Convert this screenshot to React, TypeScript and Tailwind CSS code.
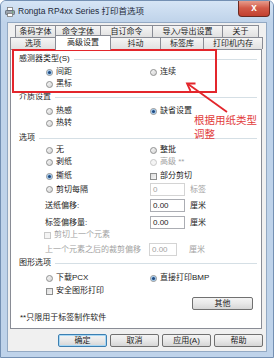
import React from "react";

function Radio({ checked = false, disabled = false }: { checked?: boolean; disabled?: boolean }) {
  return (
    <span
      className={`flex h-[7px] w-[7px] shrink-0 items-center justify-center rounded-full border ${
        disabled ? "border-[#c8c8c8] bg-[#f4f4f4]" : "border-[#8e8f8f] bg-gradient-to-br from-[#f8f8f8] to-[#d4d4d4]"
      }`}
    >
      {checked && <span className="h-[3px] w-[3px] rounded-full bg-[#1f4a80] shadow-[0_0_0_1px_#9cc3e6]" />}
    </span>
  );
}

function Check({ disabled = false }: { disabled?: boolean }) {
  return (
    <span
      className={`h-[7px] w-[7px] shrink-0 border ${
        disabled ? "border-[#c8c8c8] bg-[#f4f4f4]" : "border-[#8e8f8f] bg-gradient-to-br from-[#dcdcdc] to-[#f6f6f6]"
      }`}
    />
  );
}

function Opt({ label, checked, disabled }: { label: string; checked?: boolean; disabled?: boolean }) {
  return (
    <div className="flex items-center gap-[3px]">
      <Radio checked={checked} disabled={disabled} />
      <span className={disabled ? "text-[#a3a3a3]" : ""}>{label}</span>
    </div>
  );
}

function Box({ label, disabled }: { label: string; disabled?: boolean }) {
  return (
    <div className="flex items-center gap-[3px]">
      <Check disabled={disabled} />
      <span className={disabled ? "text-[#a3a3a3]" : ""}>{label}</span>
    </div>
  );
}

function Field({ value, disabled, narrow }: { value: string; disabled?: boolean; narrow?: boolean }) {
  return (
    <div
      className={`flex h-[13px] items-center border bg-white px-[2px] ${narrow ? "w-[28px]" : "w-[35px]"} ${
        disabled ? "border-[#d4d4d4] text-[#a3a3a3]" : "border-[#abadb3]"
      }`}
    >
      {value}
    </div>
  );
}

function Group({ label, className }: { label: string; className: string }) {
  return (
    <div className={`flex h-[12px] items-center pl-[8px] pr-[4px] ${className}`}>
      <span>{label}</span>
      <span className="ml-[4px] h-px flex-1 bg-[#d5dfe5]" />
    </div>
  );
}

function Tab({ label, w, active }: { label: string; w: string; active?: boolean }) {
  if (active) {
    return (
      <div
        className={`relative z-10 -mb-px -ml-px flex h-[15px] items-center justify-center border border-b-0 border-[#898c95] bg-white ${w}`}
      >
        {label}
      </div>
    );
  }
  return (
    <div
      className={`-ml-px flex h-[12px] items-center justify-center border border-b-0 border-[#898c95] bg-gradient-to-b from-[#f5f5f5] to-[#e1e1e1] first:ml-0 ${w}`}
    >
      {label}
    </div>
  );
}

function Btn({ label, primary }: { label: string; primary?: boolean }) {
  return (
    <div
      className={`flex h-[13px] w-[49px] items-center justify-center rounded-[2px] border bg-gradient-to-b from-[#f4f4f4] via-[#e8e8e8] to-[#d6d6d6] ${
        primary ? "border-[#3c7fb1] shadow-[inset_0_0_0_1px_#a8d8f5]" : "border-[#707070]"
      }`}
    >
      {label}
    </div>
  );
}

export default function App() {
  return (
    <div className="relative h-[358px] w-[274px] overflow-hidden rounded-t-[6px] border border-[#7490b3] bg-[#bfd3ea] font-['Liberation_Sans','Noto_Sans_CJK_SC',sans-serif] text-[8px] leading-none text-[#1b1b1b]">
      {/* title bar */}
      <div className="flex h-[21px] bg-gradient-to-b from-[#d6e5f5] to-[#bfd3ea]">
        <div className="flex items-center gap-[3px] pl-[4px]">
          <svg width="10" height="10" viewBox="0 0 10 10">
            <rect x="2.5" y="0.5" width="5" height="3" fill="#fff" stroke="#7a7a7a" strokeWidth="0.8" />
            <rect x="0.5" y="3.5" width="9" height="4" rx="0.8" fill="#9aa3ad" stroke="#5a6470" strokeWidth="0.8" />
            <rect x="2.5" y="6.5" width="5" height="3" fill="#fff" stroke="#7a7a7a" strokeWidth="0.8" />
            <rect x="7" y="4.5" width="1.2" height="1" fill="#4fb04f" />
          </svg>
          <span className="text-[8.5px] text-[#1e2a3a]">Rongta RP4xx Series 打印首选项</span>
        </div>
        <div className="ml-auto mr-[3px] -mt-px flex h-[17px] w-[32px] items-center justify-center rounded-b-[4px] border border-t-0 border-[#6a2a22] bg-gradient-to-b from-[#e9a596] via-[#d25a48] to-[#c2402f] text-[10px] font-bold text-white">
          x
        </div>
      </div>

      {/* client area */}
      <div className="mx-[6px] h-[330px] border border-[#93a9c3] bg-[#f0f0f0] pt-[2px]">
        <div className="flex h-[12px] pl-[7px]">
          <Tab label="条码字体" w="w-[41px]" />
          <Tab label="命令字体" w="w-[46px]" />
          <Tab label="自订命令" w="w-[53px]" />
          <Tab label="导入/导出设置" w="w-[71px]" />
          <Tab label="关于" w="w-[37px]" />
        </div>
        <div className="flex h-[12px] items-end pl-[2px]">
          <Tab label="选项" w="w-[46px]" />
          <Tab label="高级设置" w="w-[56px]" active />
          <Tab label="抖动" w="w-[51px]" />
          <Tab label="标签库" w="w-[44px]" />
          <Tab label="打印机内存" w="w-[60px]" />
        </div>

        {/* panel */}
        <div className="ml-[2px] flex h-[280px] w-[252px] flex-col border border-[#898c95] bg-white pt-[3px]">
          <Group label="感测器类型(S)" className="" />
          <div className="ml-[35px] mt-[1px] grid h-[12px] grid-cols-[104px_1fr] items-center">
            <Opt label="间距" checked />
            <Opt label="连续" />
          </div>
          <div className="ml-[35px] grid h-[12px] grid-cols-[104px_1fr] items-center">
            <Opt label="黑标" />
          </div>

          <Group label="介质设置" className="mt-[1px]" />
          <div className="ml-[35px] mt-[2px] grid h-[12px] grid-cols-[104px_1fr] items-center">
            <Opt label="热感" />
            <Opt label="缺省设置" checked />
          </div>
          <div className="ml-[35px] grid h-[12px] grid-cols-[104px_1fr] items-center">
            <Opt label="热转" />
          </div>

          <Group label="选项" className="mt-[3px]" />
          <div className="ml-[35px] grid h-[12px] grid-cols-[104px_1fr] items-center">
            <Opt label="无" />
            <Opt label="整批" />
          </div>
          <div className="ml-[35px] grid h-[12px] grid-cols-[104px_1fr] items-center">
            <Opt label="剥纸" />
            <Opt label="高级 **" disabled />
          </div>
          <div className="ml-[35px] mt-[2px] grid h-[12px] grid-cols-[104px_1fr] items-center">
            <Opt label="撕纸" checked />
            <Box label="部分剪切" />
          </div>
          <div className="ml-[35px] mt-[1px] grid h-[13px] grid-cols-[104px_1fr] items-center">
            <Opt label="剪切每隔" />
            <div className="flex items-center gap-[5px]">
              <Field value="0" disabled />
              <span className="text-[#a3a3a3]">标签</span>
            </div>
          </div>
          <div className="ml-[34px] mt-[3px] grid h-[13px] grid-cols-[105px_1fr] items-center">
            <span>送纸偏移:</span>
            <div className="flex items-center gap-[5px]">
              <Field value="0.00" />
              <span>厘米</span>
            </div>
          </div>
          <div className="ml-[34px] mt-[4px] grid h-[13px] grid-cols-[105px_1fr] items-center">
            <span>标签偏移量:</span>
            <div className="flex items-center gap-[5px]">
              <Field value="0.00" />
              <span>厘米</span>
            </div>
          </div>
          <div className="ml-[33px] grid h-[12px] grid-cols-[106px_1fr] items-center">
            <Box label="剪切上一个元素" disabled />
          </div>
          <div className="ml-[34px] mt-[2px] grid h-[13px] grid-cols-[104px_1fr] items-center">
            <span className="text-[#a3a3a3]">上一个元素之后的裁剪偏移</span>
            <div className="flex items-center">
              <Field value="0.00" disabled narrow />
              <span className="ml-[12px] text-[#a3a3a3]">厘米</span>
            </div>
          </div>

          <Group label="图形选项" className="mt-[1px]" />
          <div className="ml-[35px] mt-[3px] grid h-[12px] grid-cols-[104px_1fr] items-center">
            <Opt label="下载PCX" />
            <Opt label="直接打印BMP" checked />
          </div>
          <div className="ml-[35px] mt-[1px] grid h-[12px] grid-cols-[104px_1fr] items-center">
            <Box label="安全图形打印" />
          </div>
          <div className="flex h-[13px] justify-end pr-[8px]">
            <div className="flex h-[13px] w-[61px] items-center justify-center rounded-[2px] border border-[#707070] bg-gradient-to-b from-[#f4f4f4] via-[#e8e8e8] to-[#d6d6d6]">
              其他
            </div>
          </div>
          <div className="mt-[2px] flex h-[12px] items-center pl-[9px]">**只限用于标签制作软件</div>
        </div>

        {/* dialog buttons */}
        <div className="mt-[5px] flex justify-end gap-[3px] pr-[3px]">
          <Btn label="确定" primary />
          <Btn label="取消" />
          <Btn label="应用(A)" />
          <Btn label="帮助" />
        </div>
      </div>

      {/* annotation overlay */}
      <div className="absolute left-[11px] top-[48px] h-[44px] w-[205px] border-2 border-[#e3262c]" />
      <svg className="absolute left-0 top-0" width="274" height="358" viewBox="0 0 274 358">
        <line x1="226" y1="111" x2="187" y2="83" stroke="#e3262c" strokeWidth="1.8" />
        <polyline points="189.5,90 186,82.5 194.5,82.5" fill="none" stroke="#e3262c" strokeWidth="1.8" />
      </svg>
      <div className="absolute left-[193px] top-[112px] text-[10.5px] leading-[14px] text-[#e23b3b]">
        <div>根据用纸类型</div>
        <div>调整</div>
      </div>
    </div>
  );
}
